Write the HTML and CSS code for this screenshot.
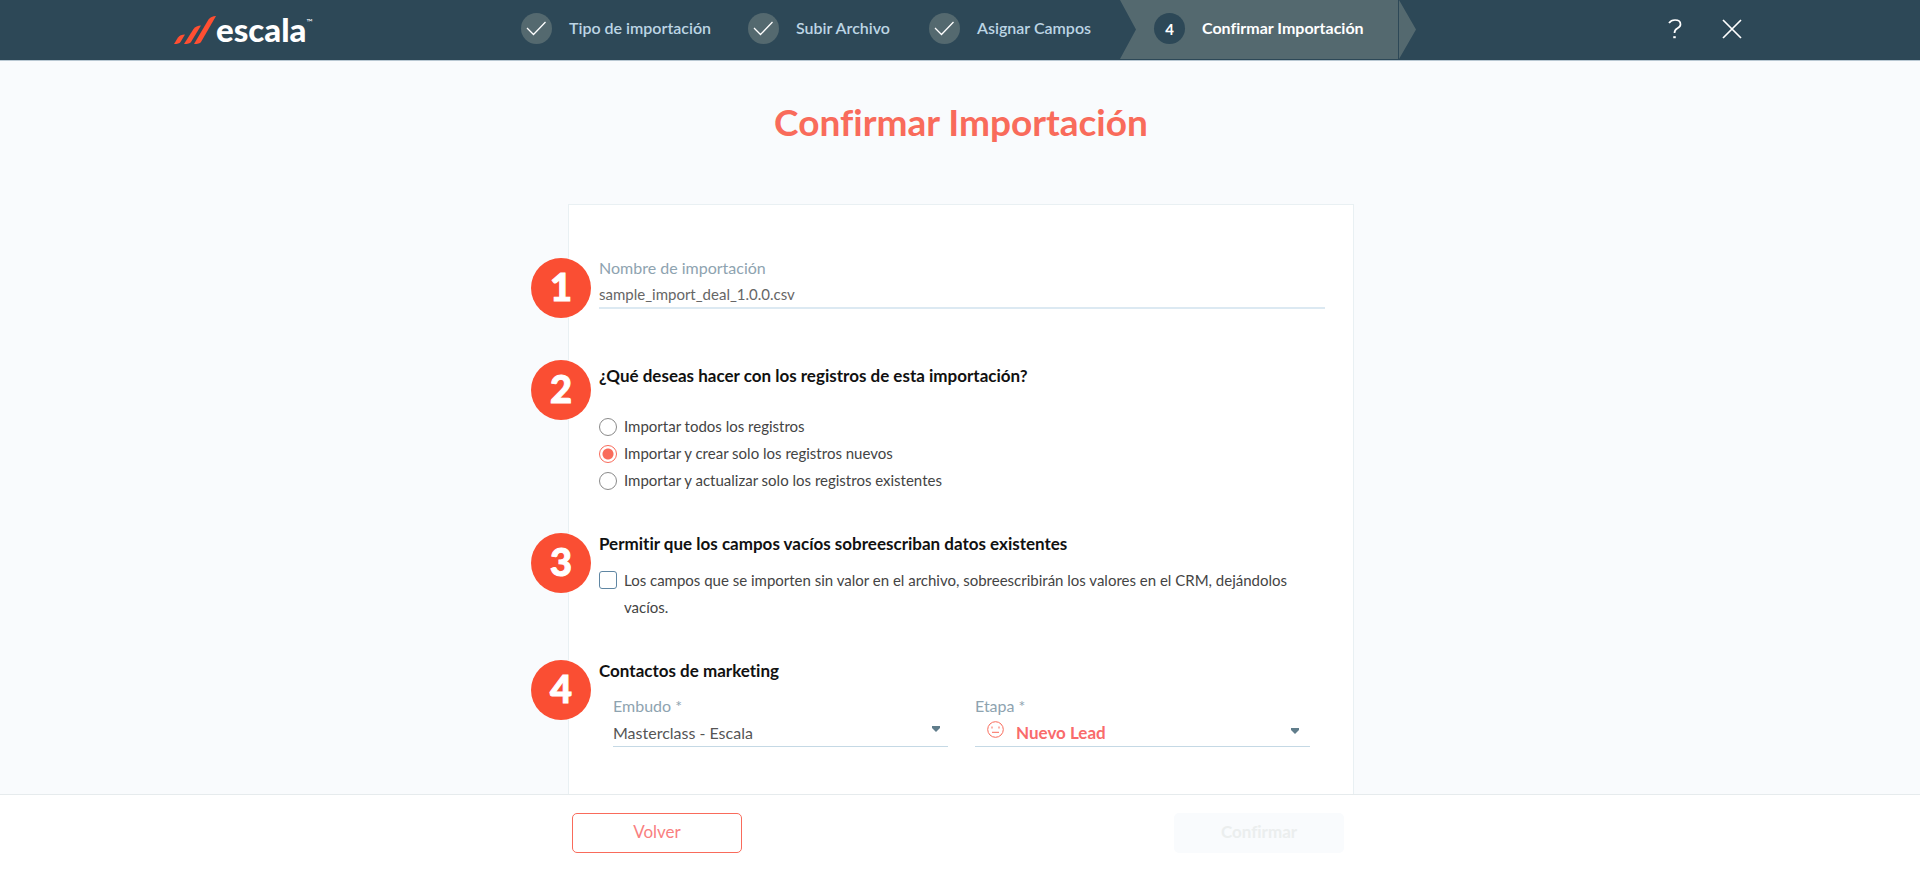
FILE: index.html
```html
<!DOCTYPE html>
<html lang="es">
<head>
<meta charset="utf-8">
<meta name="viewport" content="width=device-width, initial-scale=1">
<title>Confirmar Importación</title>
<link rel="stylesheet" href="styles.css">
</head>
<body>
<header class="topbar">
  <div class="topbar-inner">
    <a class="logo" href="#" aria-label="escala">
      <svg class="logo-mark" viewBox="0 0 42 28" aria-hidden="true">
        <path d="M0 28L4 21.500Q6 18.500 11 18.500L6.500 26Q5 28 0 28Z"/>
        <path d="M10 28L19.500 13Q22 9.500 27 9.500L17 26Q15.500 28 10 28Z"/>
        <path d="M20 28L34.500 3.500Q37 0 42 0L27 26Q25.500 28 20 28Z"/>
      </svg>
      <span class="logo-name">escala</span><span class="logo-tm">™</span>
    </a>
    <ol class="steps">
      <li class="step"><span class="step-dot"><svg viewBox="0 0 31 31" aria-hidden="true"><path d="M6 15L12.500 21.500L24.500 9"/></svg></span><span>Tipo de importación</span></li>
      <li class="step"><span class="step-dot"><svg viewBox="0 0 31 31" aria-hidden="true"><path d="M6 15L12.500 21.500L24.500 9"/></svg></span><span>Subir Archivo</span></li>
      <li class="step"><span class="step-dot"><svg viewBox="0 0 31 31" aria-hidden="true"><path d="M6 15L12.500 21.500L24.500 9"/></svg></span><span>Asignar Campos</span></li>
      <li class="step step-active" aria-current="step"><span class="step-dot">4</span><span>Confirmar Importación</span></li>
    </ol>
    <div class="topbar-actions">
      <button class="icon-button" type="button" aria-label="Ayuda"><svg width="14" height="20" viewBox="0 0 14 20" aria-hidden="true"><path d="M1 4Q3 1 7 1Q12.500 1 12.500 5.200Q12.500 7.600 9.500 9.300Q6.500 11 6.500 14"/><path d="M6.500 17.200V19.200" stroke-width="2.500"/></svg></button>
      <button class="icon-button" type="button" aria-label="Cerrar"><svg width="20" height="20" viewBox="0 0 20 20" aria-hidden="true"><path d="M1 1L19 19M19 1L1 19"/></svg></button>
    </div>
  </div>
</header>

<main class="content">
  <h1 class="title">Confirmar Importación</h1>
  <form class="card" id="import-form">
    <section class="section section-name">
      <span class="badge">1</span>
      <label class="field-label" for="import-name">Nombre de importación</label>
      <input class="text-input" id="import-name" type="text" value="sample_import_deal_1.0.0.csv">
    </section>

    <section class="section section-records" role="radiogroup" aria-labelledby="records-heading">
      <span class="badge">2</span>
      <h2 class="heading" id="records-heading">¿Qué deseas hacer con los registros de esta importación?</h2>
      <label class="option"><input class="radio" type="radio" name="mode"><span>Importar todos los registros</span></label>
      <label class="option"><input class="radio" type="radio" name="mode" checked><span>Importar y crear solo los registros nuevos</span></label>
      <label class="option"><input class="radio" type="radio" name="mode"><span>Importar y actualizar solo los registros existentes</span></label>
    </section>

    <section class="section section-empty">
      <span class="badge">3</span>
      <h2 class="heading">Permitir que los campos vacíos sobreescriban datos existentes</h2>
      <label class="option"><input class="checkbox" type="checkbox"><span>Los campos que se importen sin valor en el archivo, sobreescribirán los valores en el CRM, dejándolos vacíos.</span></label>
    </section>

    <section class="section section-marketing">
      <span class="badge">4</span>
      <h2 class="heading">Contactos de marketing</h2>
      <div class="selects">
        <div class="select-field">
          <label class="field-label" for="funnel">Embudo *</label>
          <div class="select-box">
            <select class="select" id="funnel"><option>Masterclass - Escala</option></select>
            <svg class="caret" viewBox="0 0 8 6" aria-hidden="true"><path d="M0 0H8V2L4 6L0 2Z"/></svg>
          </div>
        </div>
        <div class="select-field">
          <label class="field-label" for="stage">Etapa *</label>
          <div class="select-box">
            <svg class="face" viewBox="0 0 17 17" aria-hidden="true"><circle cx="8.500" cy="8.500" r="7.800"/><path d="M5 11.300H12"/><path d="M5 5.500V7.500M12 5.500V7.500"/></svg>
            <select class="select select-stage" id="stage"><option>Nuevo Lead</option></select>
            <svg class="caret caret-stage" viewBox="0 0 8 6" aria-hidden="true"><path d="M0 0H8V2L4 6L0 2Z"/></svg>
          </div>
        </div>
      </div>
    </section>
  </form>
</main>

<footer class="footer">
  <div class="footer-inner">
    <button class="button button-outline" type="button">Volver</button>
    <button class="button button-disabled" type="submit" form="import-form" disabled>Confirmar</button>
  </div>
</footer>
</body>
</html>
```

FILE: styles.css
```css
* { box-sizing: border-box; }

body {
  margin: 0;
  height: 100vh;
  display: flex;
  flex-direction: column;
  background: #f9fbfd;
  color: #333;
  font: 15px/27px Lato, "Open Sans", sans-serif;
  font-variant-ligatures: none;
}

input, select, button { font: inherit; color: inherit; }

.topbar { flex: none; background: #2d4857; border-bottom: 1px solid #b9c8d3; }
.topbar-inner {
  display: flex;
  align-items: center;
  height: 60px;
  max-width: 1616px;
  margin: 0 auto;
  padding: 0 26px 0 22px;
}

.logo {
  display: flex;
  align-items: center;
  flex: 0 0 347px;
  color: #fff;
  text-decoration: none;
}
.logo-mark { width: 42px; height: 28px; fill: #ff4f32; }
.logo-name { font-size: 33px; font-weight: 900; line-height: 38px; padding-bottom: 2px; }
.logo-tm { align-self: flex-start; font-size: 8px; line-height: 24px; }

.steps {
  display: grid;
  grid-template-columns: 227px 181px 191px 296px;
  align-self: stretch;
  margin: 0;
  padding: 0;
  list-style: none;
  color: #bcd5e4;
  font-size: 16px;
  font-weight: 600;
  line-height: 24px;
}
.step { display: flex; align-items: center; gap: 17px; padding-bottom: 3px; }
.step > span:last-child { padding-bottom: 2px; }
.step-dot {
  display: grid;
  place-items: center;
  flex: none;
  width: 31px;
  height: 31px;
  border-radius: 50%;
  background: #54696f;
}
.step-dot svg { width: 31px; height: 31px; fill: none; stroke: #fff; stroke-width: 1.3; }
.step-active {
  margin-bottom: 1px;
  padding: 0 0 2px 34px;
  background: linear-gradient(90deg, #54696f 278px, #2d4857 278px, #2d4857 279px, #54696f 279px);
  clip-path: polygon(0 0, 279px 0, 100% 50%, 279px 100%, 0 100%, 16px 50%);
  color: #fff;
  font-weight: 700;
}
.step-active .step-dot { background: #2d4857; font-size: 15px; }

.topbar-actions { display: flex; gap: 40px; margin-left: auto; padding-bottom: 3px; }
.icon-button { display: flex; padding: 0; border: 0; background: none; cursor: pointer; }
.icon-button svg { fill: none; stroke: #fff; stroke-width: 1.7; }

.content { flex: 1; min-height: 0; overflow: hidden; padding: 37px 22px 0 24px; }
.title {
  margin: 0 0 58px;
  color: #f96b5b;
  font-size: 37px;
  font-weight: 700;
  line-height: 48px;
  text-align: center;
}

.card {
  max-width: 786px;
  min-height: 700px;
  margin: 0 auto;
  padding: 50px 28px 50px 30px;
  border: 1px solid #e9f0f3;
  background: #fff;
}
.section { position: relative; }
.section-name { padding-bottom: 53px; }
.section-records { padding-bottom: 36px; }
.section-records .heading { margin-bottom: 24px; }
.section-empty { padding-bottom: 36px; }
.section-empty .heading { margin-bottom: 10px; }

.badge {
  position: absolute;
  top: 3px;
  left: -68px;
  display: grid;
  place-items: center;
  width: 60px;
  height: 60px;
  padding-bottom: 4px;
  border-radius: 50%;
  background: #fa4e33;
  color: #fff;
  font-size: 38px;
  font-weight: 900;
  line-height: 56px;
  -webkit-text-stroke: 1px #fff;
}
.section-records .badge { top: -2px; }

.heading { margin: 0; color: #111; font-size: 17px; font-weight: 700; line-height: 27px; }
.field-label { display: block; color: #8ea3b0; font-size: 16px; line-height: 26px; }
.text-input {
  display: block;
  width: 100%;
  height: 28px;
  padding: 0;
  border: 0;
  border-bottom: 2px solid #dce9f2;
  background: none;
  color: #666;
}

.option { display: flex; align-items: flex-start; gap: 7px; color: #444; }
.radio, .checkbox {
  appearance: none;
  flex: none;
  width: 18px;
  height: 18px;
  margin: 5px 0 0;
  border: 1px solid #8a8a8a;
  border-radius: 50%;
  background: #fff;
}
.radio:checked { border-color: #f96b5b; background: radial-gradient(circle, #f96b5b 5px, #fff 6px); }
.checkbox { margin-top: 4px; border-color: #5f86a3; border-radius: 3px; }

.selects { display: grid; grid-template-columns: 1fr 1fr; gap: 27px; padding: 9px 15px 0 14px; }
.select-box { position: relative; display: flex; align-items: center; border-bottom: 1px solid #c5d9e5; }
.select {
  appearance: none;
  flex: 1;
  height: 27px;
  padding: 0 0 6px;
  border: 0;
  background: none;
  color: #555;
  font-size: 16px;
}
.select-stage { color: #f96b6b; font-size: 17px; font-weight: 700; }
.face { flex: none; width: 17px; height: 17px; margin: 0 12px 6px; fill: none; stroke: #f96b5b; }
.caret { position: absolute; top: 7px; right: 8px; width: 8px; height: 6px; fill: #607d8b; pointer-events: none; }
.caret-stage { top: 9px; right: 11px; }

.footer { flex: none; border-top: 1px solid #e6ebed; background: #fff; }
.footer-inner {
  display: flex;
  justify-content: space-between;
  max-width: 820px;
  margin: 0 auto;
  padding: 18px 26px 17px 22px;
}
.button { width: 170px; height: 40px; padding: 0 0 3px; border: 1px solid transparent; border-radius: 5px; font-size: 17px; }
.button-outline { border-color: #f96b5b; background: #fff; color: #f98080; }
.button-disabled { background: #f9fbfd; color: #ebeeee; font-weight: 700; }
```
